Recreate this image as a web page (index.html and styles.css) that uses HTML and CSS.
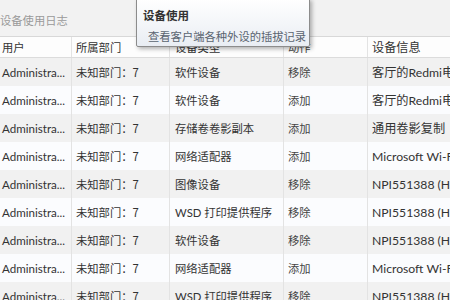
FILE: index.html
```html
<!DOCTYPE html>
<html lang="zh-CN">
<head>
<meta charset="utf-8">
<link rel="stylesheet" href="styles.css">
</head>
<body>
<div class="page">
  <div class="topbar"><span class="title">设备使用日志</span></div>
  <div class="grid">
    <div class="row head">
      <div class="c c1">用户</div><div class="c c2">所属部门</div><div class="c c3">设备类型</div><div class="c c4">动作</div><div class="c c5">设备信息</div>
    </div>
    <div class="row odd"><div class="c c1">Administra...</div><div class="c c2">未知部门：7</div><div class="c c3">软件设备</div><div class="c c4">移除</div><div class="c c5">客厅的Redmi电视</div></div>
    <div class="row even"><div class="c c1">Administra...</div><div class="c c2">未知部门：7</div><div class="c c3">软件设备</div><div class="c c4">添加</div><div class="c c5">客厅的Redmi电视</div></div>
    <div class="row odd"><div class="c c1">Administra...</div><div class="c c2">未知部门：7</div><div class="c c3">存储卷卷影副本</div><div class="c c4">添加</div><div class="c c5">通用卷影复制</div></div>
    <div class="row even"><div class="c c1">Administra...</div><div class="c c2">未知部门：7</div><div class="c c3">网络适配器</div><div class="c c4">添加</div><div class="c c5">Microsoft Wi-Fi Direct</div></div>
    <div class="row odd"><div class="c c1">Administra...</div><div class="c c2">未知部门：7</div><div class="c c3">图像设备</div><div class="c c4">移除</div><div class="c c5">NPI551388 (HP)</div></div>
    <div class="row even"><div class="c c1">Administra...</div><div class="c c2">未知部门：7</div><div class="c c3">WSD 打印提供程序</div><div class="c c4">移除</div><div class="c c5">NPI551388 (HP)</div></div>
    <div class="row odd"><div class="c c1">Administra...</div><div class="c c2">未知部门：7</div><div class="c c3">软件设备</div><div class="c c4">移除</div><div class="c c5">NPI551388 (HP)</div></div>
    <div class="row even"><div class="c c1">Administra...</div><div class="c c2">未知部门：7</div><div class="c c3">网络适配器</div><div class="c c4">添加</div><div class="c c5">Microsoft Wi-Fi Direct</div></div>
    <div class="row odd"><div class="c c1">Administra...</div><div class="c c2">未知部门：7</div><div class="c c3">WSD 打印提供程序</div><div class="c c4">移除</div><div class="c c5">NPI551388 (HP)</div></div>
  </div>
  <div class="tooltip">
    <div class="tt-title">设备使用</div>
    <div class="tt-text">查看客户端各种外设的插拔记录</div>
  </div>
</div>
</body>
</html>
```
FILE: styles.css
```css
* { box-sizing: border-box; }
html, body { margin: 0; padding: 0; }
body {
  width: 450px; height: 300px; overflow: hidden;
  font-family: "Lato", "Noto Sans CJK SC", sans-serif;
  font-size: 11.3px; color: #333;
  background: #fafafa;
}
.page { position: relative; width: 450px; height: 300px; overflow: hidden; }
.topbar {
  height: 37px; background: #f2f2f2;
  display: flex; align-items: center;
  padding-top: 4px;
  border-bottom: 1px solid #d8d8d8;
}
.title { color: #9a9a9a; font-family: "Noto Sans CJK SC", sans-serif; }
.grid { display: flex; flex-direction: column; }
.row { display: grid; grid-template-columns: 72px 98px 114px 84px 1fr; height: 28px; }
.row.head { height: 21px; background: #fdfdfd; border-bottom: 1px solid #dcdcdc; }
.row.odd { background: #f1f1f1; }
.row.even { background: #fbfcfe; }
.c {
  display: flex; align-items: center;
  padding-left: 4px; white-space: nowrap; overflow: hidden;
  border-right: 1px solid #e3e3e3;
  font-family: "Noto Sans CJK SC", sans-serif;
}
.c1 { padding-left: 2px; font-family: "Lato", "Noto Sans CJK SC", sans-serif; font-size: 11.6px; }
.head .c1 { font-size: 11.3px; }
.c3 { padding-left: 5px; font-family: "Lato", "Noto Sans CJK SC", sans-serif; font-size: 11.3px; }
.c4 { color: #444; }
.c5 { border-right: none; font-family: "Lato", "Noto Sans CJK SC", sans-serif; font-size: 12.2px; }
.tooltip {
  position: absolute; left: 136px; top: -2px; width: 174px; height: 49px;
  background: linear-gradient(#ffffff, #e9edf3);
  border: 1px solid #8c8c8c; border-radius: 2px;
  box-shadow: 2px 2px 4px rgba(0,0,0,0.3);
  font-family: "Noto Sans CJK SC", sans-serif;
  padding: 8px 0 0 6px;
  white-space: nowrap;
}
.tt-title { font-weight: bold; color: #333; line-height: 17px; font-size: 11.5px; }
.tt-text { color: #5a6470; margin-left: 5px; margin-top: 4px; line-height: 17px; }
```
